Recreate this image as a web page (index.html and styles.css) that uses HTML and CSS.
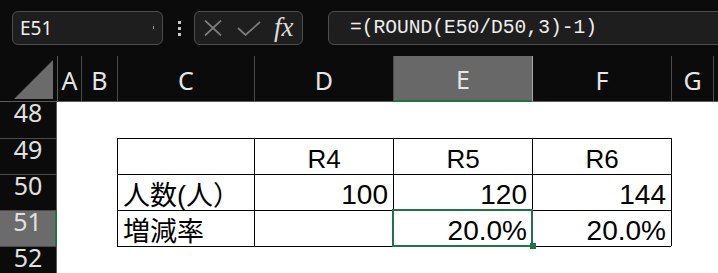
FILE: index.html
```html
<!DOCTYPE html>
<html lang="ja">
<head>
  <meta charset="UTF-8">
  <title>増減率</title>
  <link rel="stylesheet" href="styles.css">
</head>
<body>

  <div class="toolbar">
    <div class="namebox">E51<i class="tick"></i></div>
    <div class="grip"><i></i><i></i><i></i></div>
    <div class="fxbtns">
      <svg class="ico-x" width="18" height="16" viewBox="0 0 18 16">
        <path d="M1 0.5 L17 15.5 M17 0.5 L1 15.5" stroke="#7b7b7b" stroke-width="1.8" fill="none"/>
      </svg>
      <svg class="ico-ok" width="24" height="15" viewBox="0 0 24 15">
        <path d="M1 7 L8.5 14 L23 1" stroke="#7b7b7b" stroke-width="1.8" fill="none"/>
      </svg>
      <span class="fx">fx</span>
    </div>
    <div class="formula">=(ROUND(E50/D50,3)-1)</div>
  </div>

  <div class="sheet">
    <!-- column headers -->
    <div class="ch corner">
      <svg width="39" height="39" viewBox="0 0 39 39"><path d="M39 0 L39 39 L0 39 Z" fill="#6b6b6b"/></svg>
    </div>
    <div class="ch first">A</div>
    <div class="ch">B</div>
    <div class="ch">C</div>
    <div class="ch">D</div>
    <div class="ch picked">E</div>
    <div class="ch after-pick">F</div>
    <div class="ch">G</div>
    <div class="ch"></div>

    <!-- 48 -->
    <div class="rh top">48</div>
    <div class="c"></div><div class="c"></div><div class="c"></div><div class="c"></div>
    <div class="c"></div><div class="c"></div><div class="c"></div><div class="c"></div>

    <!-- 49 -->
    <div class="rh">49</div>
    <div class="c"></div><div class="c"></div>
    <div class="c t"></div>
    <div class="c t ctr">R4</div>
    <div class="c t ctr">R5</div>
    <div class="c t ctr">R6</div>
    <div class="c edge"></div><div class="c"></div>

    <!-- 50 -->
    <div class="rh">50</div>
    <div class="c"></div><div class="c"></div>
    <div class="c t jp">人数(人）</div>
    <div class="c t num">100</div>
    <div class="c t num">120</div>
    <div class="c t num">144</div>
    <div class="c edge"></div><div class="c"></div>

    <!-- 51 -->
    <div class="rh picked">51</div>
    <div class="c"></div><div class="c"></div>
    <div class="c t jp">増減率</div>
    <div class="c t num"></div>
    <div class="c t num active">20.0%</div>
    <div class="c t num">20.0%</div>
    <div class="c edge"></div><div class="c"></div>

    <!-- 52 -->
    <div class="rh">52</div>
    <div class="c"></div><div class="c"></div>
    <div class="c tb"></div><div class="c tb"></div><div class="c tb"></div><div class="c tb"></div>
    <div class="c"></div><div class="c"></div>
  </div>

</body>
</html>
```

FILE: styles.css
```css
body {
  margin: 0;
  background: #0b0b0b;
  overflow: hidden;
  font-family: "Liberation Sans", Arial, sans-serif;
}

/* formula bar */
.toolbar {
  display: flex;
  align-items: center;
  height: 56px;
  padding-left: 12px;
  box-sizing: border-box;
}

.namebox, .fxbtns, .formula {
  height: 34px;
  box-sizing: border-box;
  border: 1px solid #4d4d4d;
  border-radius: 6px;
  background: #1e1e1e;
  display: flex;
  align-items: center;
  flex-shrink: 0;
}

.namebox {
  width: 151px;
  padding-left: 7px;
  color: #eeeeee;
  font: 19px "Noto Sans", sans-serif;
  position: relative;
}

.tick {
  position: absolute;
  right: 8px;
  top: 14px;
  width: 1px;
  height: 3px;
  background: #999;
}

.grip {
  display: flex;
  flex-direction: column;
  gap: 3px;
  margin-left: 15px;
}

.grip i {
  width: 3px;
  height: 3px;
  background: #c8c8c8;
}

.fxbtns {
  width: 109px;
  margin-left: 13px;
  padding-left: 9px;
}

.ico-ok {
  margin-left: 15px;
}

.fx {
  margin-left: 13px;
  color: #dddddd;
  font: italic 27px "Liberation Serif", serif;
  line-height: 26px;
  margin-top: -2px;
}

.formula {
  width: 420px;
  margin-left: 25px;
  padding-left: 21px;
  color: #eeeeee;
  font: 19.6px "Liberation Mono", monospace;
}

/* sheet */
.sheet {
  display: grid;
  grid-template-columns: 57px 24px 36px 137px 139px 139px 139px 42px 1fr;
  grid-template-rows: 46px repeat(4, 36px) 27px;
}

.sheet > div {
  box-sizing: border-box;
}

.ch {
  background: #0b0b0b;
  color: #e6e6e6;
  border-bottom: 1px solid #5a5a5a;
  border-left: 1px solid #4a4a4a;
  display: flex;
  align-items: center;
  justify-content: center;
  font: 25px "Noto Sans", sans-serif;
  padding-top: 2px;
}

.ch.corner {
  border-left: none;
  align-items: flex-start;
  justify-content: flex-start;
  padding: 4px 0 0 14px;
}

.ch.first {
  border-left-color: #5a5a5a;
}

.ch.picked {
  background: #686868;
  border-bottom: 2px solid #217346;
}

.ch.after-pick {
  border-left-color: #a8a8a8;
}

.rh {
  background: #0b0b0b;
  color: #e0e0e0;
  border-right: 1px solid #5a5a5a;
  border-top: 1px solid #4a4a4a;
  text-align: center;
  font: 25px "Noto Sans", sans-serif;
  line-height: 20px;
}

.rh.top {
  border-top: none;
}

.rh.picked {
  background: #6b6b6b;
  border-right: 2px solid #217346;
}

.c {
  background: #ffffff;
}

.t {
  border-left: 1px solid #000;
  border-top: 1px solid #000;
  display: flex;
  align-items: flex-end;
  padding: 0 5px 2px 5px;
  color: #000;
  font-size: 26px;
  line-height: 26px;
}

.tb {
  border-top: 1px solid #000;
}

.edge {
  border-left: 1px solid #000;
}

.ctr {
  justify-content: center;
}

.num {
  justify-content: flex-end;
  font-size: 28px;
  padding-right: 5px;
}

.jp {
  font-family: "Liberation Sans", "Noto Sans CJK JP", sans-serif;
  font-size: 27px;
  padding-bottom: 1px;
}

.active {
  position: relative;
  outline: 2px solid #217346;
  outline-offset: -1px;
}

.active::after {
  content: "";
  position: absolute;
  right: -4px;
  bottom: -3px;
  width: 6px;
  height: 6px;
  background: #217346;
}
```
